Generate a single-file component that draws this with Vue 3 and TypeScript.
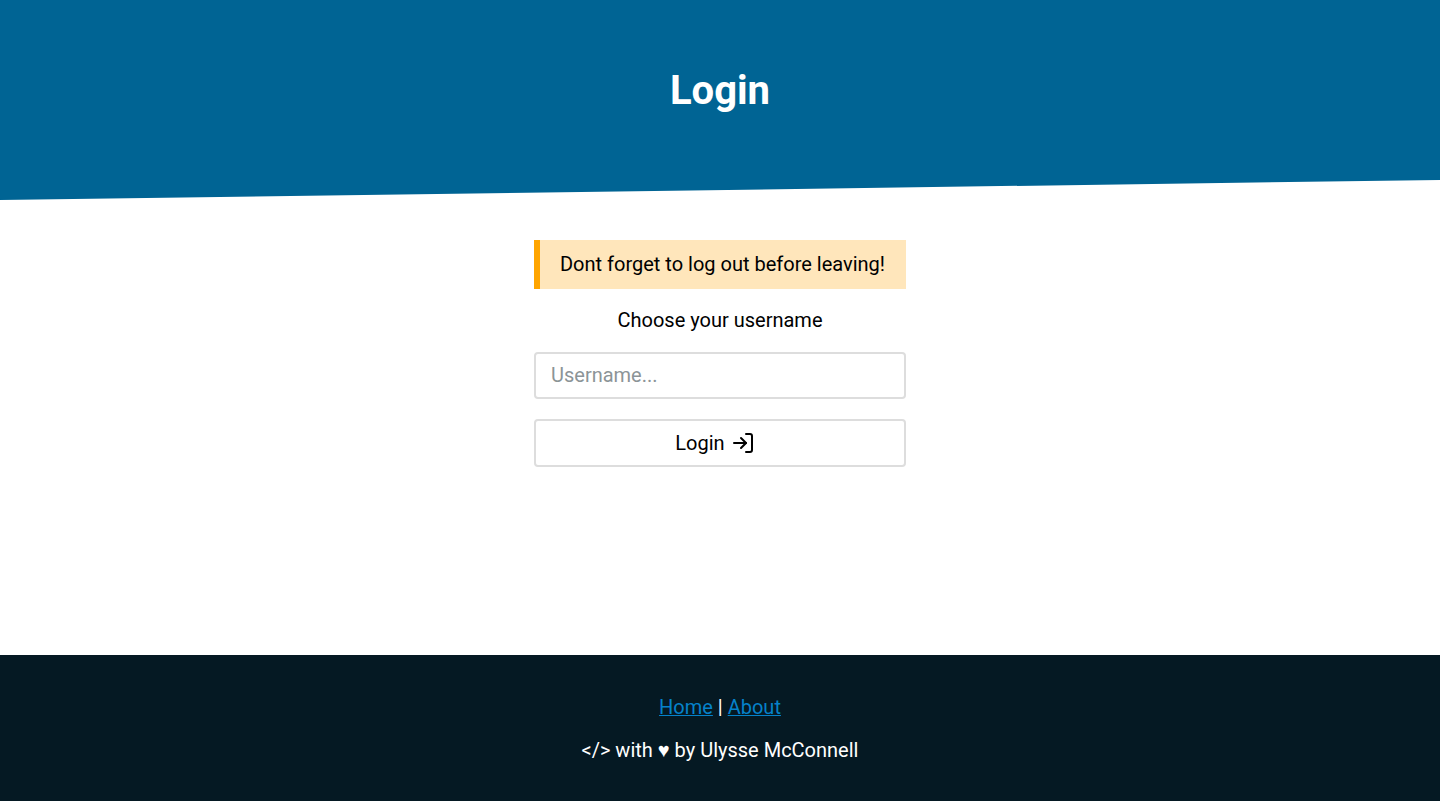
<script setup lang="ts">
import { ref } from 'vue'

const username = ref<string>('')
</script>

<template>
  <div class="page">
    <header class="banner">
      <h1>Login</h1>
    </header>
    <main class="content">
      <form class="login" @submit.prevent>
        <p class="notice">Dont forget to log out before leaving!</p>
        <label for="username">Choose your username</label>
        <input id="username" v-model="username" type="text" placeholder="Username..." />
        <button type="submit">
          <span>Login</span>
          <svg viewBox="0 0 24 24" width="24" height="24" aria-hidden="true">
            <path d="M15 3h4a2 2 0 0 1 2 2v14a2 2 0 0 1-2 2h-4" />
            <polyline points="10 17 15 12 10 7" />
            <line x1="15" y1="12" x2="3" y2="12" />
          </svg>
        </button>
      </form>
    </main>
    <footer class="footer">
      <nav><a href="#home">Home</a> | <a href="#about">About</a></nav>
      <p>&lt;/&gt; with ♥ by Ulysse McConnell</p>
    </footer>
  </div>
</template>

<style>
body {
  margin: 0;
}
</style>

<style scoped>
.page {
  display: flex;
  flex-direction: column;
  min-height: 100vh;
  font-family: Roboto, sans-serif;
  font-size: 20px;
  line-height: 23px;
  color: #000;
  background: #fff;
}

.banner {
  box-sizing: border-box;
  height: 200px;
  padding: 67px 20px 66px;
  text-align: center;
  color: #fff;
  background: #006494;
  clip-path: polygon(0 0, 100% 0, 100% 90%, 0 100%);
}

h1 {
  margin: 0;
  font-size: 40px;
  line-height: 47px;
  font-weight: 700;
}

.content {
  display: flex;
  flex: 1;
  justify-content: center;
  padding: 40px 20px;
}

.login {
  display: flex;
  flex-direction: column;
  gap: 20px;
  text-align: center;
}

.notice {
  margin: 0;
  padding: 13px 21px 13px 20px;
  border-left: 6px solid #ffa500;
  background: #ffe6bb;
}

input,
button {
  box-sizing: border-box;
  width: 100%;
  border: 2px solid #ddd;
  border-radius: 4px;
  color: #000;
  background: #fff;
  font: inherit;
}

input {
  height: 47px;
  padding: 9px 15px 11px;
}

input::placeholder {
  color: #8c9497;
}

button {
  display: flex;
  align-items: center;
  justify-content: center;
  gap: 6px;
  height: 48px;
  padding: 10px 20px 10px 10px;
}

svg {
  fill: none;
  stroke: currentColor;
  stroke-width: 2;
  stroke-linecap: round;
  stroke-linejoin: round;
}

.footer {
  padding: 41px 20px 39px;
  text-align: center;
  color: #fff;
  background: #051923;
}

.footer p {
  margin: 20px 0 0;
}

a {
  color: #0582ca;
  text-decoration-thickness: 1px;
}
</style>
